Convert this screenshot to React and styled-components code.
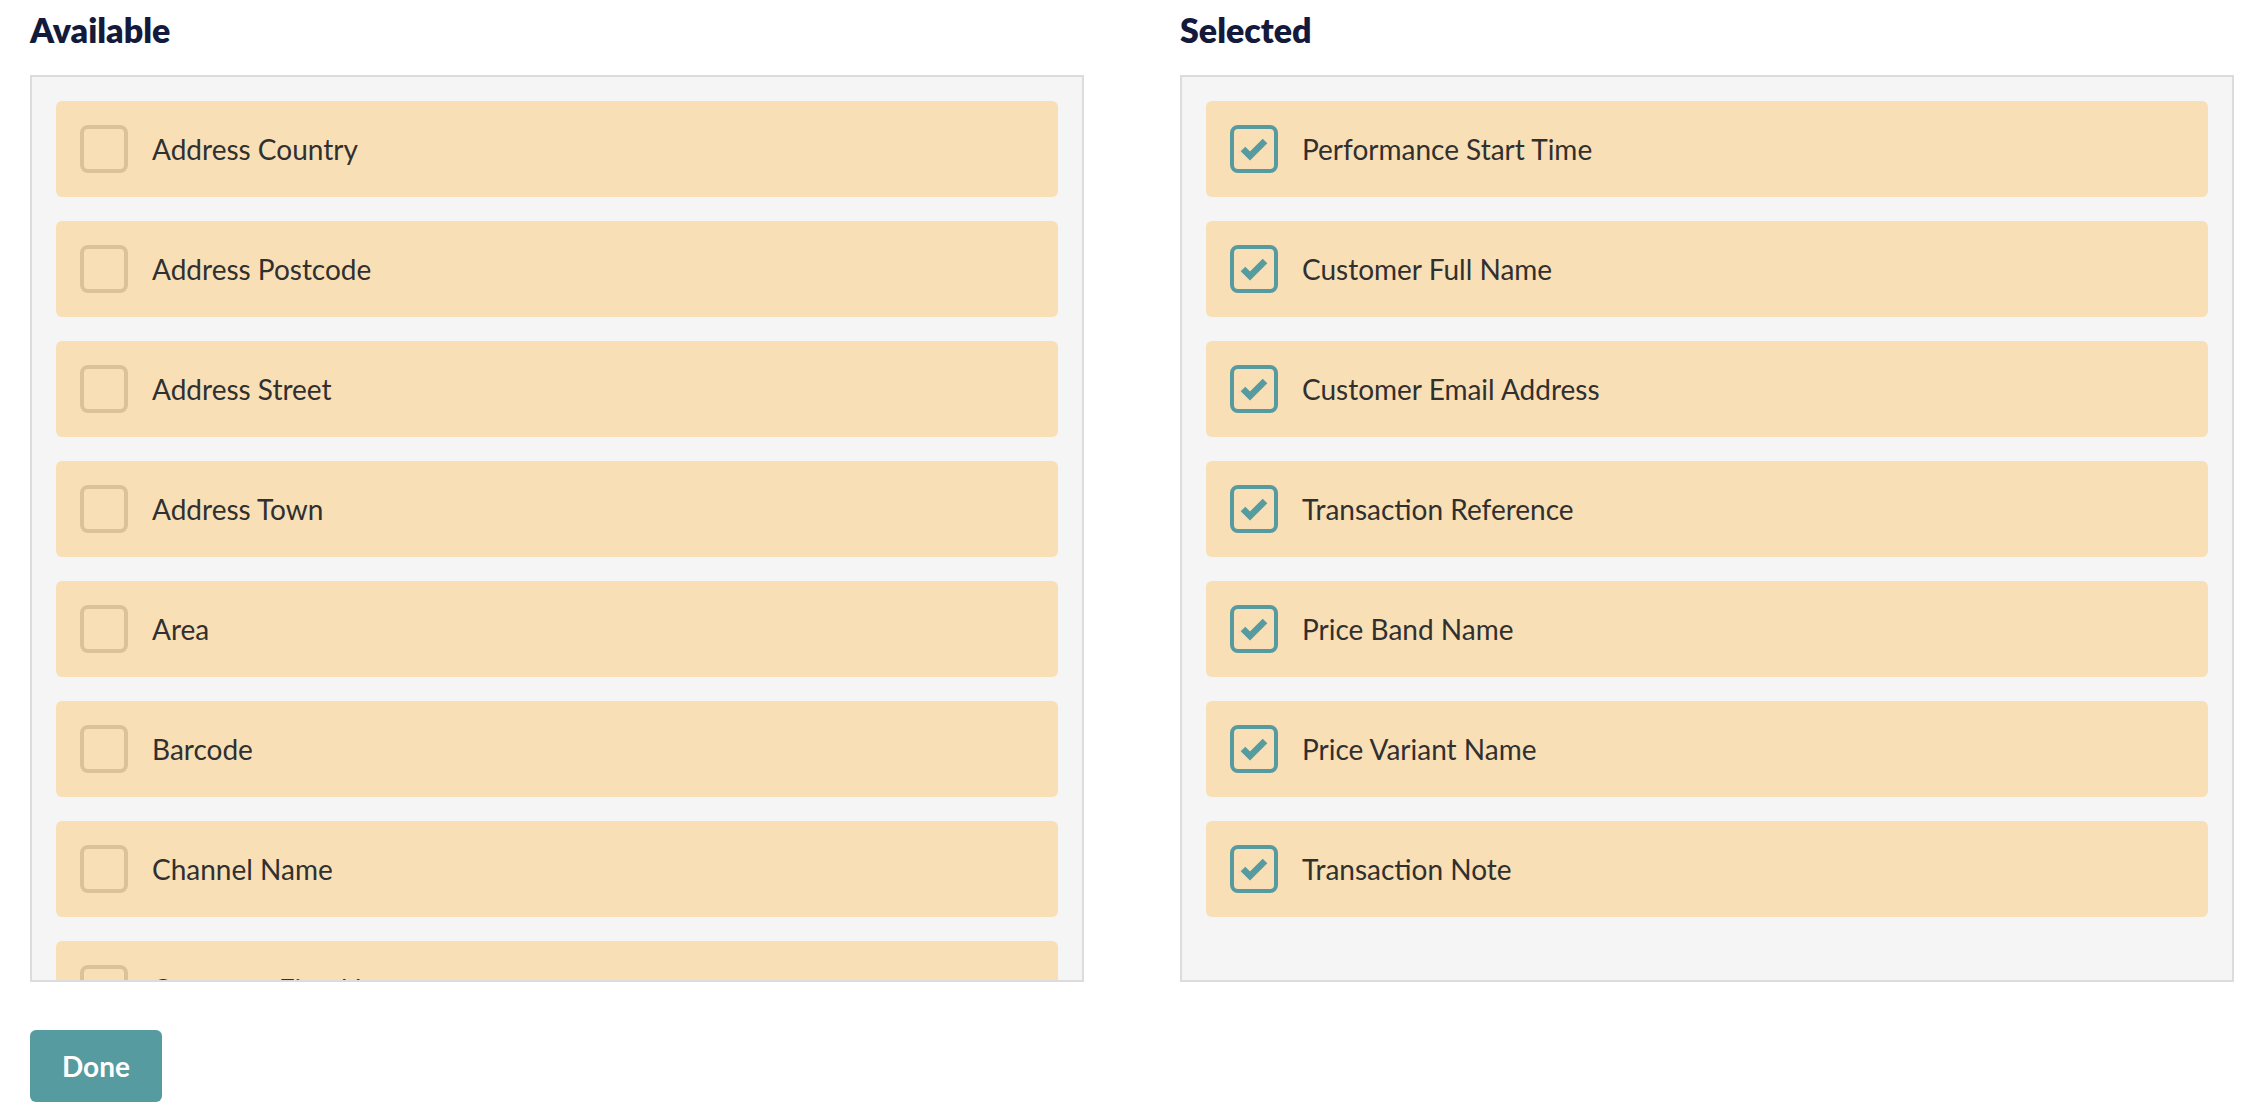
import styled, { createGlobalStyle } from 'styled-components';

const AVAILABLE = [
  'Address Country',
  'Address Postcode',
  'Address Street',
  'Address Town',
  'Area',
  'Barcode',
  'Channel Name',
  'Customer First Name',
];

const SELECTED = [
  'Performance Start Time',
  'Customer Full Name',
  'Customer Email Address',
  'Transaction Reference',
  'Price Band Name',
  'Price Variant Name',
  'Transaction Note',
];

const TEAL = '#569ba0';

const GlobalStyle = createGlobalStyle`
  html, body {
    margin: 0;
    padding: 0;
    background: #ffffff;
    font-family: Lato, "Open Sans", "Liberation Sans", sans-serif;
  }
  * { box-sizing: border-box; }
`;

const CheckMark = () => (
  <svg width="28" height="28" viewBox="0 0 28 28">
    <polyline
      points="3,14 10,21 25,6"
      fill="none"
      stroke={TEAL}
      strokeWidth="6.5"
      strokeLinejoin="miter"
    />
  </svg>
);

const FieldRow = ({ label, checked }) => (
  <Row>
    <Box checked={checked}>{checked && <CheckMark />}</Box>
    <Label>{label}</Label>
  </Row>
);

const App = () => {
  return (
    <>
      <GlobalStyle />
      <Page>
        <Columns>
          <Column>
            <Heading>Available</Heading>
            <Panel scroll>
              {AVAILABLE.map(f => <FieldRow key={f} label={f} />)}
            </Panel>
          </Column>
          <Column>
            <Heading>Selected</Heading>
            <Panel>
              {SELECTED.map(f => <FieldRow key={f} label={f} checked />)}
            </Panel>
          </Column>
        </Columns>
        <DoneButton>Done</DoneButton>
      </Page>
    </>
  );
};

// ── Styled Components ──────────────────────────────────────────

const Page = styled.div`
    padding: 11px 28px 0 30px;
`;

const Columns = styled.div`
    display: grid;
    grid-template-columns: 1fr 1fr;
    gap: 96px;
`;

const Column = styled.div`
    display: flex;
    flex-direction: column;
    min-width: 0;
`;

const Heading = styled.h2`
    margin: 0 0 26px 0;
    font-size: 34px;
    line-height: 38px;
    font-weight: 800;
    color: #131a3b;
`;

const Panel = styled.div`
    height: 907px;
    background: #f5f5f5;
    border: 2px solid #dcdcdc;
    padding: 24px;
    display: flex;
    flex-direction: column;
    gap: 24px;
    overflow-y: ${props => (props.scroll ? 'auto' : 'hidden')};
    scrollbar-width: none;
    &::-webkit-scrollbar { display: none; }
`;

const Row = styled.div`
    flex: 0 0 96px;
    display: flex;
    align-items: center;
    padding: 0 24px;
    gap: 24px;
    background: #f9dfb5;
    border-radius: 6px;
`;

const Box = styled.div`
    flex: 0 0 48px;
    width: 48px;
    height: 48px;
    border: 4px solid ${props => (props.checked ? TEAL : '#dcc298')};
    border-radius: 8px;
    display: flex;
    align-items: center;
    justify-content: center;
`;

const Label = styled.span`
    font-size: 28px;
    color: #303030;
    white-space: nowrap;
`;

const DoneButton = styled.button`
    margin-top: 48px;
    height: 72px;
    padding: 0 32px;
    background: ${TEAL};
    color: #ffffff;
    border: none;
    border-radius: 6px;
    font-family: Lato, "Open Sans", "Liberation Sans", sans-serif;
    font-size: 28px;
    font-weight: 700;
    cursor: pointer;
`;

export default App;
